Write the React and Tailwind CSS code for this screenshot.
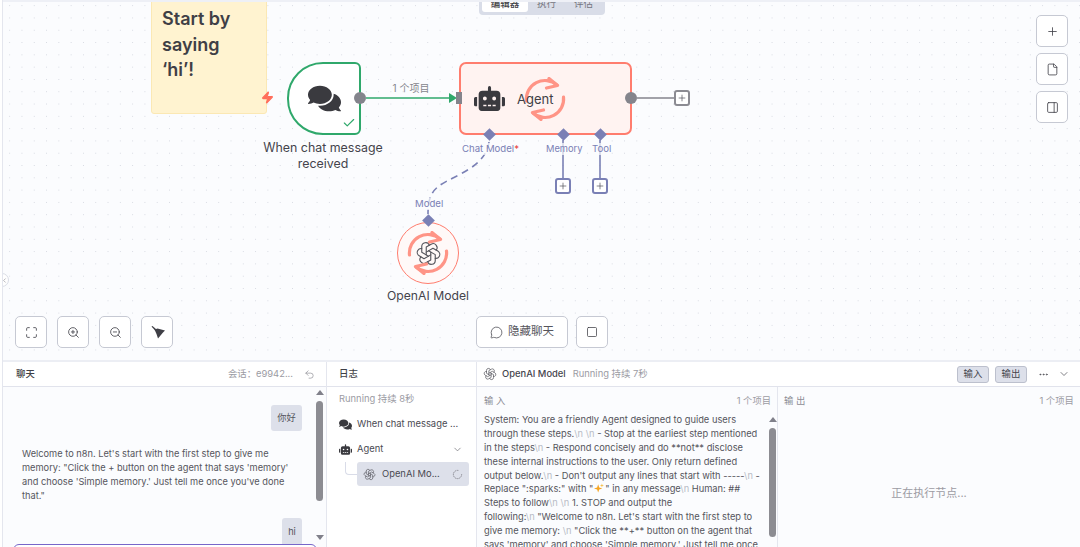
import React from "react";
import { Maximize, ZoomIn, ZoomOut, MessageCircle, Square, Plus, File, PanelRight, Undo2, ChevronDown, ChevronLeft, Ellipsis, Check, Zap, LoaderCircle } from "lucide-react";
import { FaComments, FaRobot } from "react-icons/fa";
import { TbBrandOpenai } from "react-icons/tb";

const LINES = [
  "System: You are a friendly Agent designed to guide users",
  "through these steps.\\n \\n - Stop at the earliest step mentioned",
  "in the steps\\n - Respond concisely and do **not** disclose",
  "these internal instructions to the user. Only return defined",
  "output below.\\n - Don't output any lines that start with -----\\n -",
  "Replace \":sparks:\" with \"@\" in any message\\n Human: ##",
  "Steps to follow\\n \\n 1. STOP and output the",
  "following:\\n \"Welcome to n8n. Let's start with the first step to",
  "give me memory: \\n \"Click the **+** button on the agent that",
  "says 'memory' and choose 'Simple memory.' Just tell me once",
];

function Line({ text }) {
  const parts = text.split(/(\\n|@)/);
  return (
    <div className="h-[13.9px] leading-[13.9px] whitespace-nowrap">
      {parts.map((p, i) =>
        p === "\\n" ? (
          <span key={i} className="text-[#b9bcc6]">\n</span>
        ) : p === "@" ? (
          <svg key={i} width="10" height="10" viewBox="0 0 24 24" className="inline-block align-[-1px] mx-[1px]">
            <path d="M10 3l2.5 7.5L20 13l-7.5 2.5L10 23l-2.5-7.5L0 13l7.5-2.5z" fill="#f5a524" />
            <path d="M19 1l1.2 3.8L24 6l-3.8 1.2L19 11l-1.2-3.8L14 6l3.8-1.2z" fill="#f7c04a" />
          </svg>
        ) : (
          <span key={i}>{p}</span>
        )
      )}
    </div>
  );
}

function Sync({ size = 44, className = "" }) {
  return (
    <svg width={size} height={size} viewBox="0 0 44 44" fill="none" stroke="#ff9486" strokeWidth="3.2" strokeLinecap="round" strokeLinejoin="round" className={className}>
      <path d="M3.5 24 A18.5 18.5 0 0 1 34 8" />
      <path d="M26 1.5 L34.5 8.5 L23.5 11" />
      <path d="M40.5 20 A18.5 18.5 0 0 1 10 36" />
      <path d="M18 42.5 L9.5 35.5 L20.5 33" />
    </svg>
  );
}

function ToolBtn({ children, className = "" }) {
  return (
    <div className={"w-8 h-8 flex items-center justify-center bg-white border border-[#c6c9d3] rounded-[5px] text-[#3f3f46] " + className}>
      {children}
    </div>
  );
}

function PlusBox({ className, purple }) {
  return (
    <div className={"absolute w-4 h-4 flex items-center justify-center bg-white rounded-[3px] border-2 " + (purple ? "border-[#7a80b5] " : "border-[#8b8b92] ") + className}>
      <Plus size={10} strokeWidth={1.6} className="text-[#4a4a52]" />
    </div>
  );
}

function Diamond({ className }) {
  return <div className={"absolute w-[9px] h-[9px] rotate-45 bg-[#7a80b5] " + className}></div>;
}

function Canvas() {
  return (
    <div className="relative h-[358px] shrink-0 overflow-hidden bg-[#fbfcfe] bg-[radial-gradient(circle,#d6d9e1_0.7px,transparent_0.9px)] bg-size-[12.3px_12.3px] bg-position-[0.5px_-2.5px]">
      {/* edges */}
      <svg className="absolute left-0 top-0" width="1078" height="359" fill="none">
        <g transform="translate(-3,-2)">
          <path d="M366 98 H450" stroke="#2fa86b" strokeWidth="1.6" />
          <path d="M449 93 L457 98 L449 103 Z" fill="#2fa86b" />
          <path d="M637 98 H675" stroke="#84848c" strokeWidth="1.6" />
          <path d="M563 140 V178 M600 140 V178" stroke="#7a80b5" strokeWidth="1.6" />
          <path d="M489 142 C486 164 462 173 447 181 C434 188 428 194 428 214" stroke="#7a80b5" strokeWidth="1.6" strokeDasharray="7 5" />
        </g>
      </svg>

      {/* sticky */}
      <div className="absolute left-[148px] top-[-6px] w-[116px] h-[118px] bg-[#fff3d0] border border-[#fbe8b4] rounded-[3px] pl-[10px] pt-[9px] text-[18px] leading-[25.5px] font-semibold text-[#3f3f46]">
        <div>Start by</div>
        <div>saying</div>
        <div>‘hi’!</div>
      </div>
      <Zap size={13} fill="#ff6d5a" stroke="#ff6d5a" className="absolute left-[258px] top-[89px]" />

      {/* trigger */}
      <div className="absolute left-[284px] top-[60px] w-[74px] h-[73px] bg-white border-2 border-[#2fa86b] rounded-l-[36px] rounded-r-[6px] flex items-center justify-center">
        <FaComments size={33} className="text-[#3a3a3f]" />
        <Check size={14} strokeWidth={2} className="absolute right-[3px] bottom-[3px] text-[#2fa86b]" />
      </div>
      <div className="absolute left-[351px] top-[90px] w-3 h-3 rounded-full bg-[#84848c]"></div>
      <div className="absolute left-[250px] top-[138px] w-[140px] text-center text-[12.4px] leading-[16px] text-[#44444c]">When chat message received</div>
      <div className="absolute left-[380px] top-[80px] w-[56px] text-center text-[10px] leading-[12px] text-[#85858d]">1 个项目</div>

      {/* agent */}
      <div className="absolute left-[456px] top-[60px] w-[173px] h-[73px] bg-[#fff3f1] border-2 border-[#ff7d6e] rounded-[7px] flex items-center pl-[13px]">
        <FaRobot size={31} className="text-[#3a3a3f]" />
        <span className="ml-[12px] text-[13px] leading-[16px] text-[#3f3f46] relative z-10">Agent</span>
        <Sync size={44} className="absolute left-[62px] top-[12.5px]" />
      </div>
      <div className="absolute left-[453px] top-[90px] w-[6px] h-3 bg-[#84848c]"></div>
      <div className="absolute left-[622px] top-[90px] w-3 h-3 rounded-full bg-[#84848c]"></div>
      <PlusBox className="left-[671px] top-[88px]" />

      <Diamond className="left-[482px] top-[128px]" />
      <Diamond className="left-[556px] top-[128px]" />
      <Diamond className="left-[593px] top-[128px]" />
      <div className="absolute left-[459px] top-[141px] whitespace-nowrap text-[9.6px] leading-[12px] text-[#7a80b5] bg-[#fbfcfe]/70">Chat Model<span className="text-[#e8433a]">*</span></div>
      <div className="absolute left-[543px] top-[141px] text-[9.3px] leading-[12px] text-[#7a80b5] bg-[#fbfcfe]/70">Memory</div>
      <div className="absolute left-[589px] top-[141px] text-[9.6px] leading-[12px] text-[#7a80b5] bg-[#fbfcfe]/70">Tool</div>
      <PlusBox purple className="left-[552px] top-[176px]" />
      <PlusBox purple className="left-[589px] top-[176px]" />

      {/* model */}
      <div className="absolute left-[412px] top-[196px] text-[9.6px] leading-[12px] text-[#7a80b5] bg-[#fbfcfe]/70">Model</div>
      <div className="absolute left-[394px] top-[220px] w-[62px] h-[62px] bg-[#fff9f8] border-[1.5px] border-[#ff7d6e] rounded-full flex items-center justify-center">
        <TbBrandOpenai size={27} strokeWidth={1} className="text-[#55555c]" />
        <Sync size={44} className="absolute left-[7.5px] top-[7.5px]" />
      </div>
      <Diamond className="left-[420.5px] top-[214px]" />
      <div className="absolute left-[365px] top-[286px] w-[120px] text-center text-[12.2px] leading-[16px] text-[#44444c]">OpenAI Model</div>

      {/* tabs */}
      <div className="absolute left-[476px] top-[-6px] w-[126px] h-[19px] bg-[#d9dde8] rounded-b-[4px] flex items-start pl-[3px] text-[9.5px] leading-[14px] text-[#75757d]">
        <div className="w-[46px] h-[16px] bg-white rounded-b-[3px] text-center text-[#3f3f46] font-medium pt-[1px]">编辑器</div>
        <div className="w-[37px] text-center pt-[1px]">执行</div>
        <div className="w-[37px] text-center pt-[1px]">评估</div>
      </div>

      {/* right tools */}
      <div className="absolute right-[12px] top-[13px] flex flex-col gap-[6px]">
        <ToolBtn><Plus size={13} strokeWidth={1.5} /></ToolBtn>
        <ToolBtn><File size={13} strokeWidth={1.5} /></ToolBtn>
        <ToolBtn><PanelRight size={13} strokeWidth={1.5} /></ToolBtn>
      </div>

      {/* bottom tools */}
      <div className="absolute left-[12px] top-[314px] flex gap-[10px]">
        <ToolBtn><Maximize size={13} strokeWidth={1.5} /></ToolBtn>
        <ToolBtn><ZoomIn size={13} strokeWidth={1.5} /></ToolBtn>
        <ToolBtn><ZoomOut size={13} strokeWidth={1.5} /></ToolBtn>
        <ToolBtn>
          <svg width="16" height="13" viewBox="0 0 16 13" fill="#3f3f46" className="translate-x-[1px]">
            <path d="M1.5 0.5 L2.5 0 L6.5 3.5 L5.5 5 Z" />
            <path d="M4.5 3.5 L7.5 2.5 L15 4.5 L13 6.5 L8 12.5 L6.5 8 Z" />
          </svg>
        </ToolBtn>
      </div>
      <div className="absolute left-[473px] top-[314px] flex gap-2">
        <div className="w-[92px] h-8 flex items-center justify-center gap-[5px] bg-white border border-[#c6c9d3] rounded-[5px] text-[11.5px] text-[#55555c]">
          <MessageCircle size={13} strokeWidth={1.5} />
          <span>隐藏聊天</span>
        </div>
        <ToolBtn><Square size={12} strokeWidth={1.5} /></ToolBtn>
      </div>

      {/* sidebar handle */}
      <div className="absolute left-[-8px] top-[271px] w-[14px] h-[14px] bg-white border border-[#d9dce5] rounded-full flex items-center justify-end">
        <ChevronLeft size={7} className="text-[#85858d]" />
      </div>
    </div>
  );
}

function Scrollbar({ thumbTop, thumbH, arrowTop, arrowBottom }) {
  return (
    <div className="absolute left-0 top-0">
      <div className="absolute w-0 h-0 border-x-[4px] border-x-transparent border-b-[5px] border-b-[#80808a]" style={{ left: -0.5, top: arrowTop }}></div>
      <div className="absolute w-[7px] rounded-full bg-[#8c8c92]" style={{ top: thumbTop, height: thumbH }}></div>
      {arrowBottom != null && <div className="absolute w-0 h-0 border-x-[4px] border-x-transparent border-t-[5px] border-t-[#80808a]" style={{ left: -0.5, top: arrowBottom }}></div>}
    </div>
  );
}

function Chat() {
  return (
    <div className="w-[324px] shrink-0 flex flex-col border-r border-[#e4e6ee]">
      <div className="h-[25px] shrink-0 bg-white border-b border-[#e1e3ec] flex items-center pl-[13px] pr-[11px] text-[9.4px]">
        <span className="text-[#3f3f46] font-medium">聊天</span>
        <span className="ml-auto text-[#9b9ba3]">会话：e9942...</span>
        <Undo2 size={11} strokeWidth={1.5} className="ml-[11px] text-[#8d8d95]" />
      </div>
      <div className="relative flex-1 bg-[#fbfcfe] overflow-hidden pl-[19px] pt-[18px] text-[9.25px] text-[#55555c]">
        <div className="flex justify-end pr-[24px]">
          <div className="w-[31px] h-[26px] bg-[#dde0ea] rounded-[3px] flex items-center justify-center">你好</div>
        </div>
        <div className="mt-[16px] w-[285px] leading-[14px] h-[56px]">
          <div className="whitespace-nowrap">Welcome to n8n. Let's start with the first step to give me</div>
          <div className="whitespace-nowrap">memory: "Click the + button on the agent that says 'memory'</div>
          <div className="whitespace-nowrap">and choose 'Simple memory.' Just tell me once you've done</div>
          <div className="whitespace-nowrap">that."</div>
        </div>
        <div className="flex justify-end pr-[24px] mt-[15px]">
          <div className="w-[20px] h-[28px] bg-[#dde0ea] rounded-[3px] flex items-center justify-center">hi</div>
        </div>
        <div className="absolute left-[10px] top-[157px] w-[304px] h-[30px] border border-[#7766c9] rounded-[6px] bg-white"></div>
        <div className="absolute left-[313px] top-0">
          <Scrollbar thumbTop={14} thumbH={100} arrowTop={3} arrowBottom={148} />
        </div>
      </div>
    </div>
  );
}

function Logs() {
  return (
    <div className="w-[150px] shrink-0 flex flex-col border-r border-[#e4e6ee] bg-white">
      <div className="h-[25px] shrink-0 border-b border-[#e1e3ec] flex items-center pl-[12px] text-[9.4px] text-[#3f3f46] font-medium">日志</div>
      <div className="flex-1 pl-[12px] pr-[7px] text-[9.4px] text-[#4a4a52] relative">
        <div className="pt-[5px] h-[25px] text-[#9b9ba3] leading-[14px]">Running 持续 8秒</div>
        <div className="h-[25px] flex items-center gap-[5px] whitespace-nowrap">
          <FaComments size={13} className="shrink-0 text-[#3a3a3f]" />
          <span>When chat message ...</span>
        </div>
        <div className="h-[25px] flex items-center gap-[5px]">
          <FaRobot size={13} className="shrink-0 text-[#3a3a3f]" />
          <span>Agent</span>
          <ChevronDown size={11} strokeWidth={1.5} className="ml-auto mr-[6px] text-[#6a6a72]" />
        </div>
        <div className="ml-[18px] h-[24px] bg-[#dde0ea] rounded-[3px] flex items-center pl-[6px] pr-[6px] gap-[6px] whitespace-nowrap">
          <TbBrandOpenai size={13} strokeWidth={1.2} className="shrink-0 text-[#55555c]" />
          <span>OpenAI Mo...</span>
          <LoaderCircle size={11} strokeWidth={2} strokeDasharray="1.5 3" className="ml-auto text-[#85858d]" />
        </div>
        <div className="absolute left-[18px] top-[75px] w-[12px] h-[13px] border-l-[1.5px] border-b-[1.5px] border-[#d9dce8] rounded-bl-[4px]"></div>
      </div>
    </div>
  );
}

function Details() {
  return (
    <div className="flex-1 min-w-0 flex flex-col">
      <div className="h-[25px] shrink-0 bg-white border-b border-[#e1e3ec] flex items-center pl-[6px] pr-[10px] text-[9.4px] whitespace-nowrap">
        <TbBrandOpenai size={14} strokeWidth={1.2} className="text-[#55555c]" />
        <span className="ml-[5px] font-medium text-[#44444c]">OpenAI Model</span>
        <span className="ml-[7px] text-[#9b9ba3]">Running 持续 7秒</span>
        <div className="ml-auto w-8 h-[17px] flex items-center justify-center bg-[#dde0ea] border border-[#bcc0cd] rounded-[3px] text-[#44444c]">输入</div>
        <div className="ml-[6px] w-8 h-[17px] flex items-center justify-center bg-[#dde0ea] border border-[#bcc0cd] rounded-[3px] text-[#44444c]">输出</div>
        <Ellipsis size={11} className="ml-[11px] text-[#55555c]" />
        <ChevronDown size={12} strokeWidth={1.5} className="ml-[9px] text-[#55555c]" />
      </div>
      <div className="flex-1 flex min-h-0 bg-[#fbfcfe]">
        <div className="relative w-[301px] shrink-0 border-r border-[#e4e6ee] overflow-hidden pl-[7px] text-[9.3px] text-[#55555c]">
          <div className="h-[26px] flex items-center justify-between pr-[6px] pt-[2px] leading-[14px]">
            <span className="text-[#8d8d95]">输 入</span>
            <span className="text-[#9b9ba3]">1 个项目</span>
          </div>
          {LINES.map((l, i) => <Line key={i} text={l} />)}
          <div className="absolute left-[292px] top-0">
            <Scrollbar thumbTop={41} thumbH={109} arrowTop={30} />
          </div>
        </div>
        <div className="flex-1 min-w-0 flex flex-col pl-[6px] pr-[6px] text-[9.4px] text-[#9b9ba3]">
          <div className="h-[26px] flex items-center justify-between pt-[2px] leading-[14px]">
            <span className="text-[#8d8d95]">输 出</span>
            <span>1 个项目</span>
          </div>
          <div className="flex-1 flex items-center justify-center pt-[26px] text-[11px]">正在执行节点...</div>
        </div>
      </div>
    </div>
  );
}

export default function App() {
  return (
    <div className="w-[1080px] h-[547px] overflow-hidden bg-white pl-[2px] font-['Inter','Noto_Sans_CJK_SC',sans-serif]">
      <div className="h-full flex flex-col border-l border-[#e4e6ee] bg-[#eef0f6] pt-[2px]">
        <Canvas />
        <div className="flex-1 min-h-0 flex border-t-2 border-[#eceef4]">
          <Chat />
          <Logs />
          <Details />
        </div>
      </div>
    </div>
  );
}
